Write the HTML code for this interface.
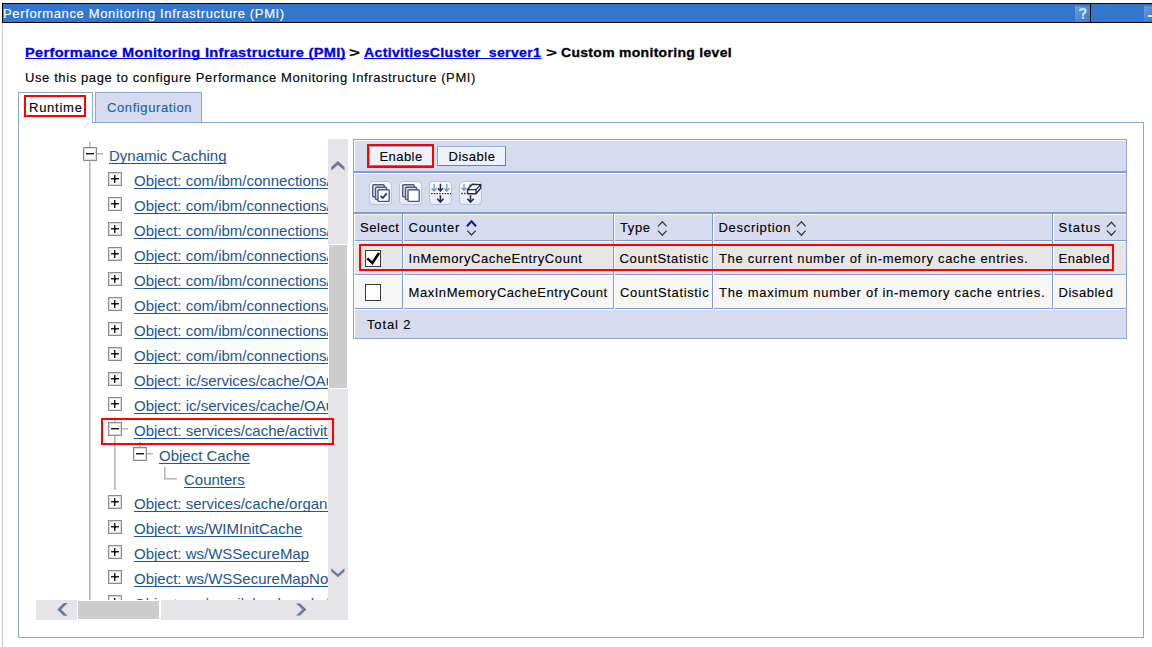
<!DOCTYPE html>
<html><head><meta charset="utf-8">
<style>
html,body{margin:0;padding:0;background:#fff;}
body{width:1152px;height:647px;overflow:hidden;position:relative;font-family:"Liberation Sans",sans-serif;}
.a{position:absolute;}
.v{position:absolute;white-space:nowrap;font-size:13px;line-height:15px;letter-spacing:0.6px;color:#000;-webkit-text-stroke:0.12px currentColor;}
.b{font-weight:bold;}
.lk{color:#0000f0;text-decoration:underline;text-decoration-skip-ink:none;}
/* title */
#title{left:2px;top:3px;width:1087px;height:18px;border:1px solid #000;background:#3277cc;}
#title2{left:1090px;top:3px;width:70px;height:18px;border:1px solid #000;background:#3277cc;}
/* frame */
#frameL{left:2px;top:23px;width:1px;height:624px;background:#c4c4c4;}
/* tabs */
#tabRun{left:18px;top:92px;width:73px;height:30px;border:1px solid #8ea6d6;border-bottom:none;background:#fff;}
#tabCfg{left:95px;top:92px;width:105px;height:29px;border:1px solid #8ea6d6;border-bottom:none;background:#d6dbef;}
#panel{left:18px;top:122px;width:1124px;height:515px;border:1px solid #8ea6d6;border-top:none;}
#panelTop{left:92px;top:122px;width:1052px;height:1px;background:#8ea6d6;}
.red{position:absolute;border:2px solid #ff0000;box-sizing:border-box;}
/* table */
#tbl{left:353px;top:139px;width:772px;height:198px;border:1px solid #8aa3d4;background:#d6dbee;}
.hl{position:absolute;background:#7f9dd3;}
.wh{position:absolute;background:#fff;}
.btn{position:absolute;box-sizing:border-box;background:#edf1fb;border:1px solid #5c7fb8;border-top-color:#8eaad6;border-left-color:#8eaad6;box-shadow:inset 1px 1px 0 #f5f7fd;}
.ib{position:absolute;box-sizing:border-box;width:23px;height:24px;border:1px solid #b5c4e2;border-radius:4px;background:linear-gradient(#fbfcfe,#e9ecf4);}
/* tree */
.tr{position:absolute;white-space:nowrap;font-size:15px;line-height:17px;color:#23558d;text-decoration:underline;text-decoration-skip-ink:none;text-underline-offset:2px;}
.bx{position:absolute;box-sizing:border-box;width:14px;height:14px;border:1px solid #8c8c8c;box-shadow:inset 0 0 0 1px #dcdcdc;background:#fff;}
.tl{position:absolute;background:#b3b3b3;}
</style></head><body>
<div id="title" class="a"></div>
<div id="title2" class="a"></div>
<div class="v" style="left:3px;top:6px;color:#fff;-webkit-text-stroke:0.1px #fff;letter-spacing:0.64px;">Performance Monitoring Infrastructure (PMI)</div>
<div id="frameL" class="a"></div>

<!-- breadcrumb -->
<div class="v b lk" style="left:25px;top:45px;letter-spacing:0.3px;transform:scaleX(1.119);transform-origin:0 0;-webkit-text-stroke:0.3px #0000f0;">Performance Monitoring Infrastructure (PMI)</div>
<div class="v b" style="left:349px;top:45px;transform:scaleX(1.45);transform-origin:0 0;">&gt;</div>
<div class="v b lk" style="left:364px;top:45px;letter-spacing:0.3px;transform:scaleX(1.083);transform-origin:0 0;-webkit-text-stroke:0.3px #0000f0;">ActivitiesCluster_server1</div>
<div class="v b" style="left:546px;top:45px;transform:scaleX(1.45);transform-origin:0 0;">&gt;</div>
<div class="v b" style="left:561px;top:45px;letter-spacing:0.3px;transform:scaleX(1.073);transform-origin:0 0;-webkit-text-stroke:0.3px #000;">Custom monitoring level</div>
<div class="v" style="left:25px;top:70px;">Use this page to configure Performance Monitoring Infrastructure (PMI)</div>

<!-- tabs -->
<div id="panel" class="a"></div>
<div id="panelTop" class="a"></div>
<div id="tabRun" class="a"></div>
<div id="tabCfg" class="a"></div>
<div class="v" style="left:29px;top:100px;letter-spacing:0.75px;">Runtime</div>
<div class="v" style="left:107px;top:100px;color:#16629f;">Configuration</div>
<div class="red" style="left:24px;top:95px;width:62px;height:22px;"></div>


<!-- tree -->
<div class="a" style="left:36px;top:139px;width:292px;height:461px;overflow:hidden;">
<div class="tl" style="left:53px;top:3px;width:2px;height:458px;background:linear-gradient(90deg,#b9b9b9 50%,#d3d3d3 50%);"></div>
<div class="tl" style="left:78px;top:278px;width:2px;height:73px;background:linear-gradient(90deg,#b9b9b9 50%,#d3d3d3 50%);"></div>
<div class="tl" style="left:103px;top:303px;width:2px;height:5px;background:linear-gradient(90deg,#b9b9b9 50%,#d3d3d3 50%);"></div>
<div class="tl" style="left:128px;top:328px;width:2px;height:12px;background:linear-gradient(90deg,#b9b9b9 50%,#d3d3d3 50%);"></div>
<div class="tl" style="left:128px;top:339px;width:13px;height:2px;background:linear-gradient(180deg,#b9b9b9 50%,#d3d3d3 50%);"></div>
<div class="bx" style="left:47px;top:8px;"><div class="a" style="left:2px;top:5px;width:8px;height:2px;background:linear-gradient(#1a1a1a 50%,#9a9a9a 50%);"></div></div>
<div class="tl" style="left:61px;top:14px;width:6px;height:2px;background:linear-gradient(180deg,#b9b9b9 50%,#d3d3d3 50%);"></div>
<div class="tr" style="left:73px;top:8px;">Dynamic Caching</div>
<div class="bx" style="left:72px;top:33px;"><div class="a" style="left:2px;top:5px;width:8px;height:2px;background:linear-gradient(#1a1a1a 50%,#9a9a9a 50%);"></div><div class="a" style="left:5px;top:2px;width:2px;height:8px;background:linear-gradient(90deg,#1a1a1a 50%,#9a9a9a 50%);"></div><div class="a" style="left:5px;top:5px;width:2px;height:2px;background:#151515;"></div></div>
<div class="tr" style="left:98px;top:33px;">Object: com/ibm/connections/cache/lconn</div>
<div class="bx" style="left:72px;top:58px;"><div class="a" style="left:2px;top:5px;width:8px;height:2px;background:linear-gradient(#1a1a1a 50%,#9a9a9a 50%);"></div><div class="a" style="left:5px;top:2px;width:2px;height:8px;background:linear-gradient(90deg,#1a1a1a 50%,#9a9a9a 50%);"></div><div class="a" style="left:5px;top:5px;width:2px;height:2px;background:#151515;"></div></div>
<div class="tr" style="left:98px;top:58px;">Object: com/ibm/connections/cache/lconn</div>
<div class="bx" style="left:72px;top:83px;"><div class="a" style="left:2px;top:5px;width:8px;height:2px;background:linear-gradient(#1a1a1a 50%,#9a9a9a 50%);"></div><div class="a" style="left:5px;top:2px;width:2px;height:8px;background:linear-gradient(90deg,#1a1a1a 50%,#9a9a9a 50%);"></div><div class="a" style="left:5px;top:5px;width:2px;height:2px;background:#151515;"></div></div>
<div class="tr" style="left:98px;top:83px;">Object: com/ibm/connections/cache/lconn</div>
<div class="bx" style="left:72px;top:108px;"><div class="a" style="left:2px;top:5px;width:8px;height:2px;background:linear-gradient(#1a1a1a 50%,#9a9a9a 50%);"></div><div class="a" style="left:5px;top:2px;width:2px;height:8px;background:linear-gradient(90deg,#1a1a1a 50%,#9a9a9a 50%);"></div><div class="a" style="left:5px;top:5px;width:2px;height:2px;background:#151515;"></div></div>
<div class="tr" style="left:98px;top:108px;">Object: com/ibm/connections/cache/lconn</div>
<div class="bx" style="left:72px;top:133px;"><div class="a" style="left:2px;top:5px;width:8px;height:2px;background:linear-gradient(#1a1a1a 50%,#9a9a9a 50%);"></div><div class="a" style="left:5px;top:2px;width:2px;height:8px;background:linear-gradient(90deg,#1a1a1a 50%,#9a9a9a 50%);"></div><div class="a" style="left:5px;top:5px;width:2px;height:2px;background:#151515;"></div></div>
<div class="tr" style="left:98px;top:133px;">Object: com/ibm/connections/cache/lconn</div>
<div class="bx" style="left:72px;top:158px;"><div class="a" style="left:2px;top:5px;width:8px;height:2px;background:linear-gradient(#1a1a1a 50%,#9a9a9a 50%);"></div><div class="a" style="left:5px;top:2px;width:2px;height:8px;background:linear-gradient(90deg,#1a1a1a 50%,#9a9a9a 50%);"></div><div class="a" style="left:5px;top:5px;width:2px;height:2px;background:#151515;"></div></div>
<div class="tr" style="left:98px;top:158px;">Object: com/ibm/connections/cache/lconn</div>
<div class="bx" style="left:72px;top:183px;"><div class="a" style="left:2px;top:5px;width:8px;height:2px;background:linear-gradient(#1a1a1a 50%,#9a9a9a 50%);"></div><div class="a" style="left:5px;top:2px;width:2px;height:8px;background:linear-gradient(90deg,#1a1a1a 50%,#9a9a9a 50%);"></div><div class="a" style="left:5px;top:5px;width:2px;height:2px;background:#151515;"></div></div>
<div class="tr" style="left:98px;top:183px;">Object: com/ibm/connections/cache/lconn</div>
<div class="bx" style="left:72px;top:208px;"><div class="a" style="left:2px;top:5px;width:8px;height:2px;background:linear-gradient(#1a1a1a 50%,#9a9a9a 50%);"></div><div class="a" style="left:5px;top:2px;width:2px;height:8px;background:linear-gradient(90deg,#1a1a1a 50%,#9a9a9a 50%);"></div><div class="a" style="left:5px;top:5px;width:2px;height:2px;background:#151515;"></div></div>
<div class="tr" style="left:98px;top:208px;">Object: com/ibm/connections/cache/lconn</div>
<div class="bx" style="left:72px;top:233px;"><div class="a" style="left:2px;top:5px;width:8px;height:2px;background:linear-gradient(#1a1a1a 50%,#9a9a9a 50%);"></div><div class="a" style="left:5px;top:2px;width:2px;height:8px;background:linear-gradient(90deg,#1a1a1a 50%,#9a9a9a 50%);"></div><div class="a" style="left:5px;top:5px;width:2px;height:2px;background:#151515;"></div></div>
<div class="tr" style="left:98px;top:233px;">Object: ic/services/cache/OAuth20</div>
<div class="bx" style="left:72px;top:258px;"><div class="a" style="left:2px;top:5px;width:8px;height:2px;background:linear-gradient(#1a1a1a 50%,#9a9a9a 50%);"></div><div class="a" style="left:5px;top:2px;width:2px;height:8px;background:linear-gradient(90deg,#1a1a1a 50%,#9a9a9a 50%);"></div><div class="a" style="left:5px;top:5px;width:2px;height:2px;background:#151515;"></div></div>
<div class="tr" style="left:98px;top:258px;">Object: ic/services/cache/OAuth20</div>
<div class="bx" style="left:72px;top:283px;"><div class="a" style="left:2px;top:5px;width:8px;height:2px;background:linear-gradient(#1a1a1a 50%,#9a9a9a 50%);"></div></div>
<div class="tl" style="left:86px;top:289px;width:6px;height:2px;background:linear-gradient(180deg,#b9b9b9 50%,#d3d3d3 50%);"></div>
<div class="tr" style="left:98px;top:283px;">Object: services/cache/activities</div>
<div class="bx" style="left:97px;top:308px;"><div class="a" style="left:2px;top:5px;width:8px;height:2px;background:linear-gradient(#1a1a1a 50%,#9a9a9a 50%);"></div></div>
<div class="tl" style="left:111px;top:314px;width:6px;height:2px;background:linear-gradient(180deg,#b9b9b9 50%,#d3d3d3 50%);"></div>
<div class="tr" style="left:123px;top:308px;">Object Cache</div>
<div class="tr" style="left:148px;top:332px;">Counters</div>
<div class="bx" style="left:72px;top:356px;"><div class="a" style="left:2px;top:5px;width:8px;height:2px;background:linear-gradient(#1a1a1a 50%,#9a9a9a 50%);"></div><div class="a" style="left:5px;top:2px;width:2px;height:8px;background:linear-gradient(90deg,#1a1a1a 50%,#9a9a9a 50%);"></div><div class="a" style="left:5px;top:5px;width:2px;height:2px;background:#151515;"></div></div>
<div class="tr" style="left:98px;top:356px;">Object: services/cache/organization</div>
<div class="bx" style="left:72px;top:381px;"><div class="a" style="left:2px;top:5px;width:8px;height:2px;background:linear-gradient(#1a1a1a 50%,#9a9a9a 50%);"></div><div class="a" style="left:5px;top:2px;width:2px;height:8px;background:linear-gradient(90deg,#1a1a1a 50%,#9a9a9a 50%);"></div><div class="a" style="left:5px;top:5px;width:2px;height:2px;background:#151515;"></div></div>
<div class="tr" style="left:98px;top:381px;">Object: ws/WIMInitCache</div>
<div class="bx" style="left:72px;top:406px;"><div class="a" style="left:2px;top:5px;width:8px;height:2px;background:linear-gradient(#1a1a1a 50%,#9a9a9a 50%);"></div><div class="a" style="left:5px;top:2px;width:2px;height:8px;background:linear-gradient(90deg,#1a1a1a 50%,#9a9a9a 50%);"></div><div class="a" style="left:5px;top:5px;width:2px;height:2px;background:#151515;"></div></div>
<div class="tr" style="left:98px;top:406px;">Object: ws/WSSecureMap</div>
<div class="bx" style="left:72px;top:431px;"><div class="a" style="left:2px;top:5px;width:8px;height:2px;background:linear-gradient(#1a1a1a 50%,#9a9a9a 50%);"></div><div class="a" style="left:5px;top:2px;width:2px;height:8px;background:linear-gradient(90deg,#1a1a1a 50%,#9a9a9a 50%);"></div><div class="a" style="left:5px;top:5px;width:2px;height:2px;background:#151515;"></div></div>
<div class="tr" style="left:98px;top:431px;">Object: ws/WSSecureMapNotification</div>
<div class="bx" style="left:72px;top:456px;"><div class="a" style="left:2px;top:5px;width:8px;height:2px;background:linear-gradient(#1a1a1a 50%,#9a9a9a 50%);"></div><div class="a" style="left:5px;top:2px;width:2px;height:8px;background:linear-gradient(90deg,#1a1a1a 50%,#9a9a9a 50%);"></div><div class="a" style="left:5px;top:5px;width:2px;height:2px;background:#151515;"></div></div>
<div class="tr" style="left:98px;top:456px;">Object: ws/email_bookmark_handler</div>
</div>
<!-- scrollbars -->
<div class="a" style="left:328px;top:139px;width:20px;height:481px;background:#e7e4e9;"></div>
<div class="wh" style="left:328px;top:244px;width:20px;height:145px;"></div>
<div class="a" style="left:329px;top:245px;width:18px;height:143px;background:#cdcdcd;"></div>
<div class="a" style="left:36px;top:600px;width:312px;height:20px;background:#e7e4e9;"></div>
<div class="wh" style="left:77px;top:600px;width:84px;height:20px;"></div>
<div class="a" style="left:78px;top:601px;width:81px;height:18px;background:#cdcdcd;"></div>
<svg class="a" style="left:0;top:0;" width="360" height="630">
 <polygon fill="#6a7a98" points="337.9,160.9 344.5,166.9 344.5,170.6 337.9,164.9 331.3,170.6 331.3,166.9"/>
 <polygon fill="#6a7a98" points="331.3,568.2 337.9,573.9 344.5,568.2 344.5,571.6 337.9,577.3 331.3,571.6"/>
 <polygon fill="#6a7a98" points="57.3,609.4 63.7,603 67.6,603 61.2,609.4 67.6,615.8 63.7,615.8"/>
 <polygon fill="#6a7a98" points="306.4,609.6 300,603.6 296.1,603.6 302.5,609.6 296.1,615.6 300,615.6"/>
</svg>
<div class="red" style="left:101px;top:418px;width:233px;height:27px;"></div>

<!-- table panel -->
<div id="tbl" class="a"></div>
<div class="wh" style="left:354px;top:140px;width:772px;height:1px;"></div>
<div class="wh" style="left:354px;top:140px;width:1px;height:198px;"></div>
<div class="hl" style="left:354px;top:171px;width:772px;height:2px;"></div>
<div class="wh" style="left:354px;top:173px;width:772px;height:1px;"></div>
<div class="hl" style="left:354px;top:212px;width:772px;height:2px;"></div>
<div class="wh" style="left:354px;top:214px;width:772px;height:1px;"></div>
<div class="hl" style="left:354px;top:240px;width:772px;height:1px;"></div>
<div class="a" style="left:354px;top:241px;width:772px;height:33px;background:#e6e6e6;"></div>
<div class="wh" style="left:354px;top:241px;width:772px;height:1px;"></div>
<div class="hl" style="left:354px;top:274px;width:772px;height:1px;"></div>
<div class="a" style="left:354px;top:275px;width:772px;height:33px;background:#f6f6f6;"></div>
<div class="wh" style="left:354px;top:275px;width:772px;height:1px;"></div>
<div class="hl" style="left:354px;top:308px;width:772px;height:1px;"></div>
<div class="wh" style="left:354px;top:309px;width:772px;height:1px;"></div>
<div class="wh" style="left:354px;top:214px;width:1px;height:95px;"></div>
<div class="hl" style="left:402px;top:214px;width:1px;height:95px;"></div>
<div class="wh" style="left:403px;top:214px;width:1px;height:95px;"></div>
<div class="hl" style="left:613px;top:214px;width:1px;height:95px;"></div>
<div class="wh" style="left:614px;top:214px;width:1px;height:95px;"></div>
<div class="hl" style="left:712px;top:214px;width:1px;height:95px;"></div>
<div class="wh" style="left:713px;top:214px;width:1px;height:95px;"></div>
<div class="hl" style="left:1052px;top:214px;width:1px;height:95px;"></div>
<div class="wh" style="left:1053px;top:214px;width:1px;height:95px;"></div>

<!-- buttons -->
<div class="btn" style="left:369px;top:146px;width:64px;height:20px;"></div>
<div class="btn" style="left:437px;top:146px;width:69px;height:20px;"></div>
<div class="v" style="left:379.5px;top:149px;letter-spacing:0.44px;">Enable</div>
<div class="v" style="left:448.5px;top:149px;letter-spacing:0.52px;">Disable</div>
<div class="red" style="left:367px;top:144px;width:67px;height:24px;"></div>

<!-- icon buttons -->
<div class="ib" style="left:369px;top:181px;"></div>
<div class="ib" style="left:399px;top:181px;"></div>
<div class="ib" style="left:429px;top:181px;"></div>
<div class="ib" style="left:459px;top:181px;"></div>

<!-- header -->
<div class="v" style="left:360px;top:220px;letter-spacing:0.56px;">Select</div>
<div class="v" style="left:408.5px;top:220px;letter-spacing:0.75px;">Counter</div>
<div class="v" style="left:620px;top:220px;letter-spacing:0.6px;">Type</div>
<div class="v" style="left:718.5px;top:220px;letter-spacing:0.7px;">Description</div>
<div class="v" style="left:1058.5px;top:220px;letter-spacing:1px;">Status</div>

<!-- rows -->
<div class="v" style="left:408.5px;top:251px;letter-spacing:0.59px;">InMemoryCacheEntryCount</div>
<div class="v" style="left:619.5px;top:251px;letter-spacing:0.65px;">CountStatistic</div>
<div class="v" style="left:719px;top:251px;letter-spacing:0.68px;">The current number of in-memory cache entries.</div>
<div class="v" style="left:1058.5px;top:251px;letter-spacing:0.55px;">Enabled</div>
<div class="red" style="left:359px;top:244px;width:755px;height:27px;"></div>

<div class="v" style="left:408.5px;top:285px;letter-spacing:0.55px;">MaxInMemoryCacheEntryCount</div>
<div class="v" style="left:620px;top:285px;letter-spacing:0.65px;">CountStatistic</div>
<div class="v" style="left:719px;top:285px;letter-spacing:0.7px;">The maximum number of in-memory cache entries.</div>
<div class="v" style="left:1058.5px;top:285px;letter-spacing:0.54px;">Disabled</div>

<div class="v" style="left:367px;top:317px;letter-spacing:0.87px;">Total 2</div>


<!-- title icons -->
<div class="a" style="left:1075px;top:6px;width:15px;height:16px;background:linear-gradient(135deg,#6aa0dd,#4a86cf 60%,#3f7cc6);"></div>
<svg class="a" style="left:1075px;top:6px;" width="15" height="16"><path d="M4.9,4.9 Q5,3 7.8,3 Q10.6,3 10.6,5.1 Q10.6,6.6 8.9,7.4 Q7.9,7.9 7.9,9.8" fill="none" stroke="#d6e4f5" stroke-width="2.1"/><rect x="6.8" y="10.6" width="2.3" height="2.1" fill="#d6e4f5"/></svg>
<div class="a" style="left:1144px;top:6px;width:10px;height:15px;background:linear-gradient(135deg,#6aa0dd,#4a86cf 60%,#3f7cc6);"></div>
<div class="a" style="left:1148px;top:15px;width:6px;height:2px;background:#e6eef9;"></div>

<!-- checkboxes -->
<div class="a" style="left:365px;top:250px;width:14px;height:15px;border:1px solid #3a3a3a;background:#fff;"></div>
<svg class="a" style="left:365px;top:250px;" width="17" height="17"><polyline points="2.3,8.4 7.4,13 14,3" fill="none" stroke="#000" stroke-width="2.6"/></svg>
<div class="a" style="left:365px;top:284px;width:14px;height:15px;border:1px solid #3a3a3a;background:#fff;"></div>

<!-- sort icons -->
<svg class="a" style="left:460px;top:216px;" width="20" height="24"><polyline points="7,10.2 11.5,5.3 16,10.2" fill="none" stroke="#14148a" stroke-width="2"/><polyline points="7.4,14.6 11.5,19 15.6,14.6" fill="none" stroke="#3a3a3a" stroke-width="1.3"/></svg>
<svg class="a" style="left:650px;top:215px;" width="20" height="24"><polyline points="7.9,11.4 12.4,6.8 16.6,11.4" fill="none" stroke="#3a3a3a" stroke-width="1.3"/><polyline points="7.9,15.6 12.4,20.3 16.6,15.6" fill="none" stroke="#3a3a3a" stroke-width="1.3"/></svg>
<svg class="a" style="left:789px;top:215px;" width="20" height="24"><polyline points="7.9,11.4 12.4,6.8 16.6,11.4" fill="none" stroke="#3a3a3a" stroke-width="1.3"/><polyline points="7.9,15.6 12.4,20.3 16.6,15.6" fill="none" stroke="#3a3a3a" stroke-width="1.3"/></svg>
<svg class="a" style="left:1099px;top:215px;" width="20" height="24"><polyline points="7.9,11.9 12.4,7.3 16.6,11.9" fill="none" stroke="#3a3a3a" stroke-width="1.3"/><polyline points="7.9,15.6 12.4,20.3 16.6,15.6" fill="none" stroke="#3a3a3a" stroke-width="1.3"/></svg>

<!-- toolbar icon glyphs -->
<svg class="a" style="left:369px;top:181px;" width="24" height="24">
 <g fill="#e4e8f2" stroke="#4b5a82" stroke-width="1.4">
 <rect x="3.7" y="3.7" width="11.5" height="12" rx="1"/>
 <rect x="6.5" y="6.3" width="11" height="12.2" rx="1"/>
 <rect x="9" y="8.8" width="11.2" height="11.6" rx="1" fill="#fff"/>
 </g>
 <polyline points="11.6,14.8 13.8,17 17.8,12.4" fill="none" stroke="#26345a" stroke-width="1.8"/>
</svg>
<svg class="a" style="left:399px;top:181px;" width="24" height="24">
 <g fill="#e4e8f2" stroke="#4b5a82" stroke-width="1.4">
 <rect x="3.7" y="3.7" width="11.5" height="12" rx="1"/>
 <rect x="6.5" y="6.3" width="11" height="12.2" rx="1"/>
 <rect x="9" y="8.8" width="11.2" height="11.6" rx="1" fill="#fff"/>
 </g>
</svg>
<svg class="a" style="left:429px;top:181px;" width="24" height="24">
 <g fill="none" stroke-width="1.3">
 <path d="M5.1,2.8 V10 M2.6,7.3 L5.1,10 L7.6,7.3" stroke="#7796c2"/>
 <path d="M17.8,2.8 V10 M15.3,7.3 L17.8,10 L20.3,7.3" stroke="#7796c2"/>
 <path d="M11.4,2.8 V10 M8.9,7.3 L11.4,10 L13.9,7.3" stroke="#1e2c50" stroke-width="1.5"/>
 <path d="M2,12.7 H22" stroke="#2a3a60" stroke-dasharray="1.6,1.1"/>
 <path d="M11.4,14.3 V21 M8.2,17.8 L11.4,21 L14.6,17.8" stroke="#1e2c50" stroke-width="1.6"/>
 </g>
</svg>
<svg class="a" style="left:459px;top:181px;" width="24" height="24">
 <g fill="none" stroke-width="1.3">
 <path d="M5,3 V9.2 M2.6,6.7 L5,9.2 L7.4,6.7" stroke="#7796c2"/>
 <path d="M11,3 V6" stroke="#7796c2"/>
 <path d="M2.2,12.5 H7.2" stroke="#2a3a60" stroke-dasharray="1.6,1.1"/>
 <path d="M11.5,14.3 V21 M8.3,17.8 L11.5,21 L14.7,17.8" stroke="#1e2c50" stroke-width="1.6"/>
 </g>
 <path d="M8.6,8.6 L13.2,3.2 L21.6,3.6 L21.6,7.2 L17,12.8 L8.6,12.8 Z" fill="#fff" stroke="#1e2c50" stroke-width="1.5"/>
 <path d="M8.6,8.6 L17,8.6 L21.6,3.6 M17,8.6 L17,12.8" fill="none" stroke="#1e2c50" stroke-width="1.3"/>
</svg>

</body></html>
